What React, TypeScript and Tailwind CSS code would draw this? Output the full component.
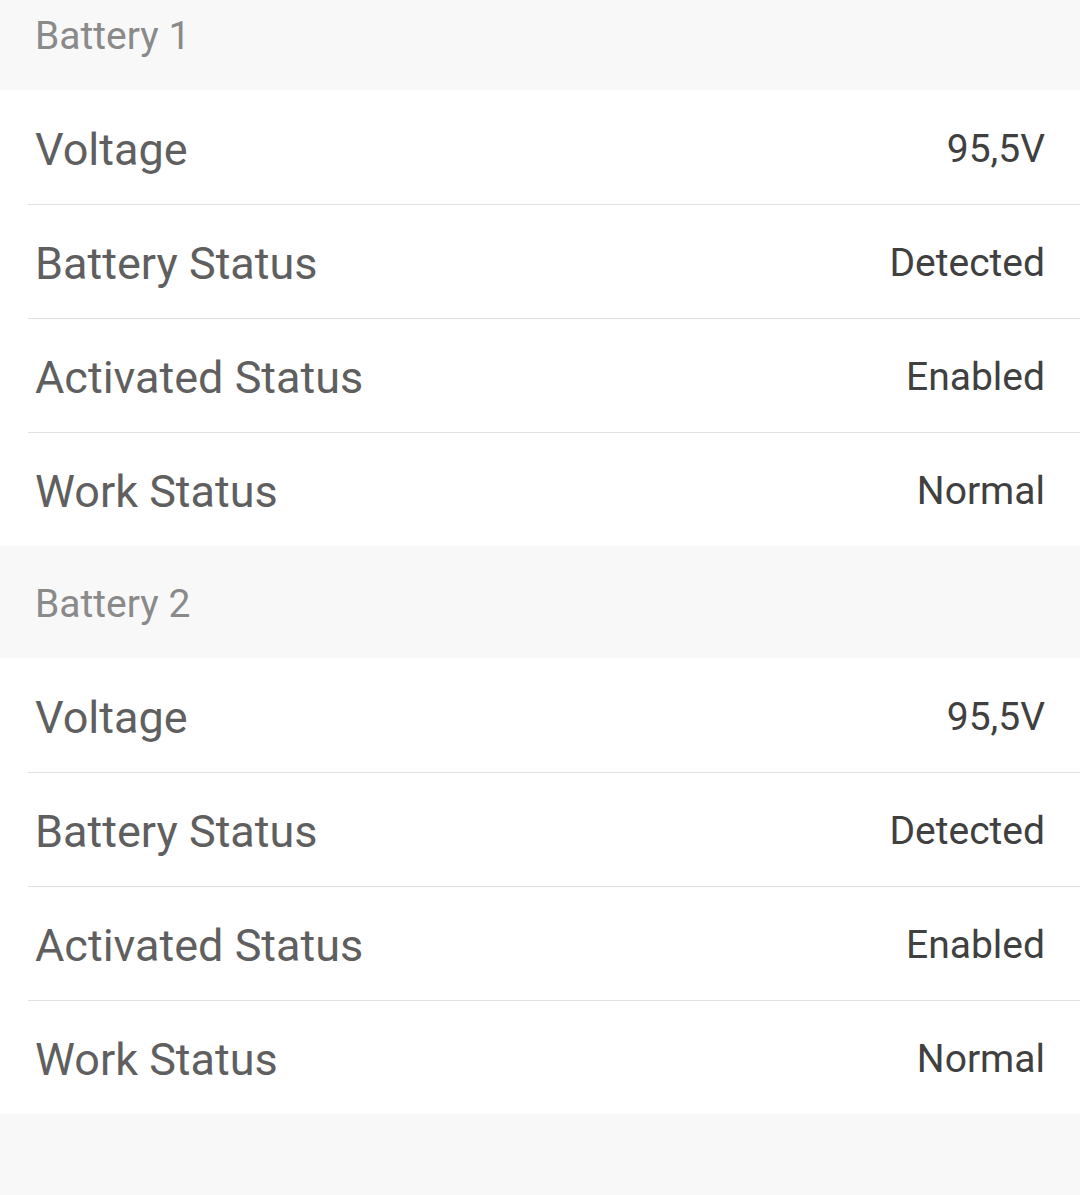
const groups = [
  {
    title: "Battery 1",
    headerClass: "h-[90px] pt-[17px]",
    rows: [
      ["Voltage", "95,5V"],
      ["Battery Status", "Detected"],
      ["Activated Status", "Enabled"],
      ["Work Status", "Normal"],
    ],
  },
  {
    title: "Battery 2",
    headerClass: "h-[112px] pt-[39px]",
    rows: [
      ["Voltage", "95,5V"],
      ["Battery Status", "Detected"],
      ["Activated Status", "Enabled"],
      ["Work Status", "Normal"],
    ],
  },
];

export default function App() {
  return (
    <div
      className="min-h-[1195px] w-full bg-[#f8f8f8]"
      style={{ fontFamily: "Roboto, 'Noto Sans', sans-serif" }}
    >
      {groups.map((g) => (
        <section key={g.title}>
          <div
            className={`px-[35px] text-[39px] leading-none text-[#8a8a8a] ${g.headerClass}`}
          >
            {g.title}
          </div>
          <div className="bg-white pt-px">
            {g.rows.map(([label, value], i) => (
              <div key={label}>
                <div className="flex h-[113px] items-center justify-between px-[35px] pt-[4px]">
                  <span className="text-[45px] leading-none text-[#5f5f5f]">
                    {label}
                  </span>
                  <span className="text-[39px] leading-none text-[#404040]">
                    {value}
                  </span>
                </div>
                {i < g.rows.length - 1 && (
                  <div className="ml-[28px] h-px bg-[#e2e2e2]" />
                )}
              </div>
            ))}
          </div>
        </section>
      ))}
    </div>
  );
}
